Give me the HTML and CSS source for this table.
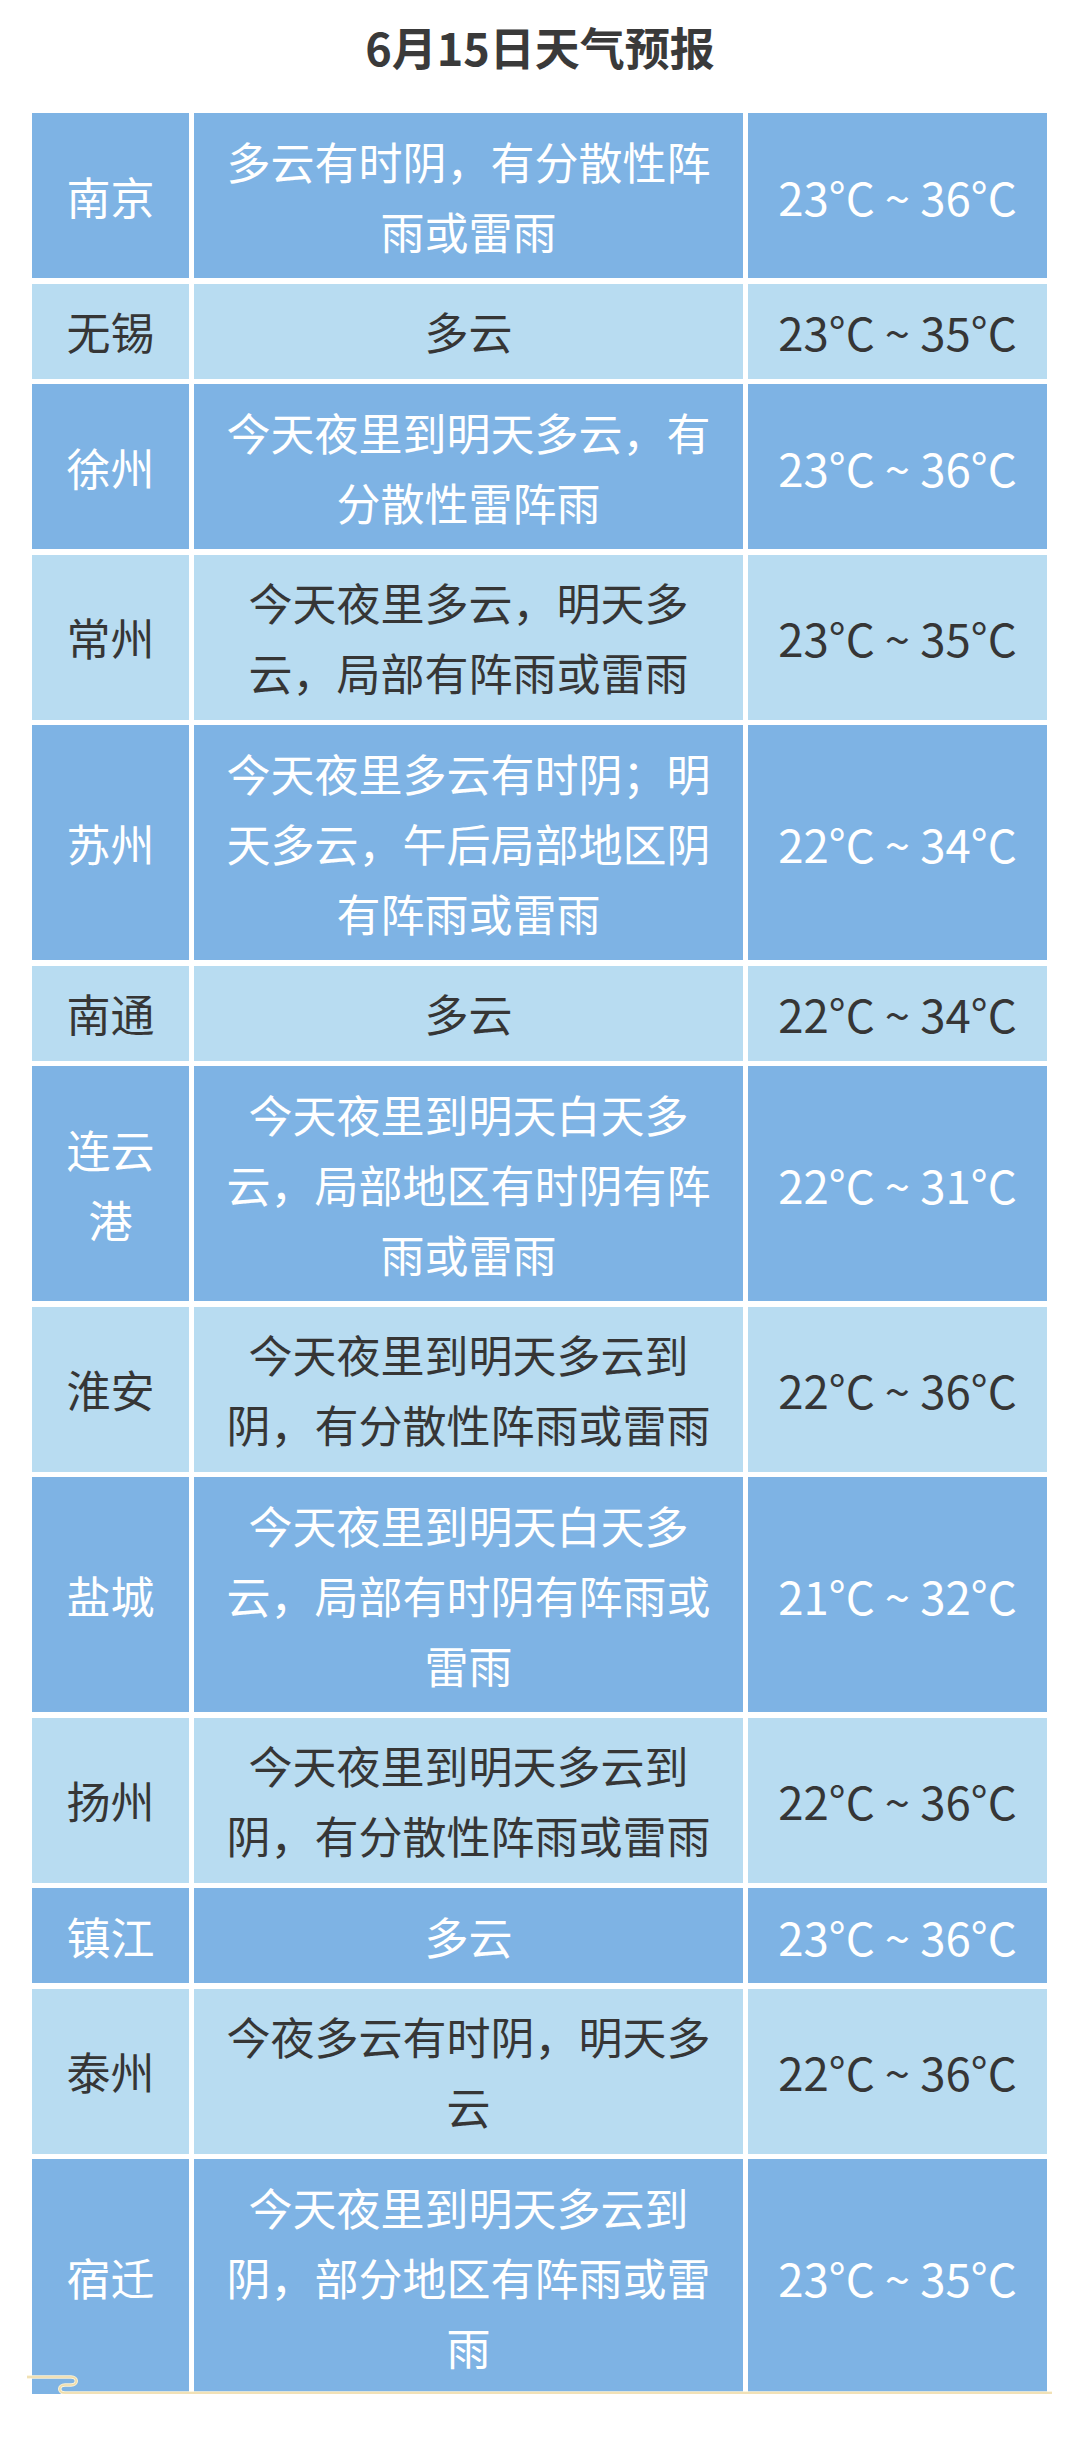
FILE: index.html
```html
<!DOCTYPE html>
<html lang="zh-CN">
<head>
<meta charset="utf-8">
<title>6月15日天气预报</title>
<link rel="stylesheet" href="styles.css">
</head>
<body>
<div class="page">
  <h1 class="title">6月15日天气预报</h1>
  <div class="sheet">
    <div class="rows">
      <div class="row dark"><div class="cell name">南京</div><div class="cell desc">多云有时阴，有分散性阵雨或雷雨</div><div class="cell temp">23°C ~ 36°C</div></div>
      <div class="row light"><div class="cell name">无锡</div><div class="cell desc">多云</div><div class="cell temp">23°C ~ 35°C</div></div>
      <div class="row dark"><div class="cell name">徐州</div><div class="cell desc">今天夜里到明天多云，有分散性雷阵雨</div><div class="cell temp">23°C ~ 36°C</div></div>
      <div class="row light"><div class="cell name">常州</div><div class="cell desc">今天夜里多云，明天多云，局部有阵雨或雷雨</div><div class="cell temp">23°C ~ 35°C</div></div>
      <div class="row dark"><div class="cell name">苏州</div><div class="cell desc">今天夜里多云有时阴；明天多云，午后局部地区阴有阵雨或雷雨</div><div class="cell temp">22°C ~ 34°C</div></div>
      <div class="row light"><div class="cell name">南通</div><div class="cell desc">多云</div><div class="cell temp">22°C ~ 34°C</div></div>
      <div class="row dark"><div class="cell name">连云港</div><div class="cell desc">今天夜里到明天白天多云，局部地区有时阴有阵雨或雷雨</div><div class="cell temp">22°C ~ 31°C</div></div>
      <div class="row light"><div class="cell name">淮安</div><div class="cell desc">今天夜里到明天多云到阴，有分散性阵雨或雷雨</div><div class="cell temp">22°C ~ 36°C</div></div>
      <div class="row dark"><div class="cell name">盐城</div><div class="cell desc">今天夜里到明天白天多云，局部有时阴有阵雨或雷雨</div><div class="cell temp">21°C ~ 32°C</div></div>
      <div class="row light"><div class="cell name">扬州</div><div class="cell desc">今天夜里到明天多云到阴，有分散性阵雨或雷雨</div><div class="cell temp">22°C ~ 36°C</div></div>
      <div class="row dark"><div class="cell name">镇江</div><div class="cell desc">多云</div><div class="cell temp">23°C ~ 36°C</div></div>
      <div class="row light"><div class="cell name">泰州</div><div class="cell desc">今夜多云有时阴，明天多云</div><div class="cell temp">22°C ~ 36°C</div></div>
      <div class="row dark"><div class="cell name">宿迁</div><div class="cell desc">今天夜里到明天多云到阴，部分地区有阵雨或雷雨</div><div class="cell temp">23°C ~ 35°C</div></div>
    </div>
    <svg class="ribbon" width="1036" height="22" viewBox="0 0 1036 22" aria-hidden="true">
      <path d="M3 2 H47 C54 2 54 10 47 10 H41 C34 10 34 18 41 18 H1028" fill="none" stroke="#fbf3d8" stroke-width="3.5"/>
      <path d="M3 2 H47 C54 2 54 10 47 10 H41 C34 10 34 18 41 18 H1028" fill="none" stroke="#eedcaa" stroke-width="1.6"/>
    </svg>
  </div>
</div>
</body>
</html>
```
FILE: styles.css
```css
html, body {
  margin: 0;
  padding: 0;
  background: #ffffff;
}

body {
  font-family: "Noto Sans CJK SC", "Noto Sans", sans-serif;
  color: #333333;
}

.page {
  width: 1080px;
  padding-top: 17px;
}

.title {
  margin: 0 0 36px;
  font-size: 45px;
  line-height: 60px;
  font-weight: 700;
  text-align: center;
  color: #3a3a3a;
}

.sheet {
  position: relative;
  width: 1015px;
  margin-left: 32px;
}

.rows {
  display: flex;
  flex-direction: column;
  row-gap: 5.5px;
}

.row {
  display: grid;
  grid-template-columns: 157px 549px 299px;
  column-gap: 5px;
}

.cell {
  display: flex;
  align-items: center;
  justify-content: center;
  text-align: center;
  font-size: 44px;
  line-height: 70px;
  padding: 12.5px 24px;
}

.cell.name {
  padding-left: 14px;
  padding-right: 14px;
}

.cell.temp {
  white-space: nowrap;
  font-size: 45.5px;
  padding-left: 10px;
  padding-right: 10px;
}

.dark .cell {
  background: #7eb3e4;
  color: #ffffff;
}

.light .cell {
  background: #b8dcf1;
  color: #363636;
}

.ribbon {
  position: absolute;
  left: -8px;
  bottom: -3px;
  overflow: visible;
}
```
